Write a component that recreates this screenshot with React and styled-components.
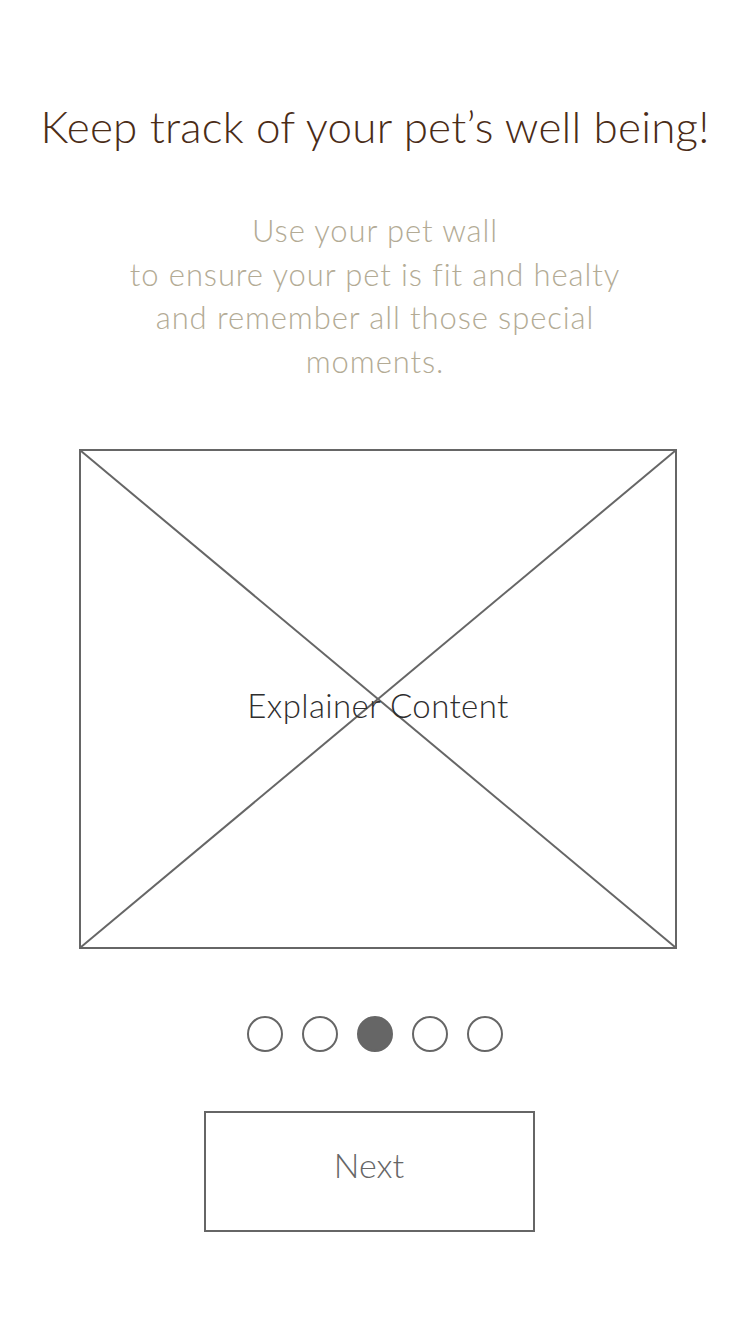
import React from "react";
import styled, { createGlobalStyle } from "styled-components";

const Global = createGlobalStyle`
  html, body { margin: 0; padding: 0; background: #fff; }
  body { font-family: Lato, "Open Sans", sans-serif; font-weight: 300; }
`;

const Page = styled.main`
  width: 750px;
  min-height: 1334px;
  display: flex;
  flex-direction: column;
  align-items: center;
  box-sizing: border-box;
  padding-top: 96px;
`;

const Title = styled.h1`
  margin: 0;
  font-size: 44px;
  font-weight: 300;
  line-height: 60px;
  color: #4a2c17;
  white-space: nowrap;
  letter-spacing: 0.2px;
`;

const Subtitle = styled.p`
  margin: 53px 0 0;
  font-size: 31px;
  line-height: 43.5px;
  font-weight: 300;
  color: #b3ab95;
  text-align: center;
  letter-spacing: 0.9px;
`;

const Explainer = styled.div`
  position: relative;
  margin: 66px 0 0 6px;
  width: 598px;
  height: 500px;
  box-sizing: border-box;
  border: 2px solid #666;
  display: flex;
  align-items: center;
  justify-content: center;
`;

const Cross = styled.svg`
  position: absolute;
  inset: 0;
  width: 100%;
  height: 100%;
`;

const ExplainerLabel = styled.span`
  position: relative;
  margin-top: 12px;
  font-size: 33px;
  font-weight: 300;
  color: #2e2e2e;
  letter-spacing: 0.4px;
`;

const Dots = styled.div`
  display: flex;
  gap: 19px;
  margin-top: 67px;
`;

const Dot = styled.span`
  width: 36px;
  height: 36px;
  box-sizing: border-box;
  border-radius: 50%;
  border: 2px solid #666;
  background: ${(p) => (p.$active ? "#666" : "#fff")};
`;

const NextButton = styled.button`
  margin: 59px 12px 0 0;
  width: 331px;
  height: 121px;
  box-sizing: border-box;
  border: 2px solid #666;
  background: #fff;
  font-family: Lato, "Open Sans", sans-serif;
  font-weight: 300;
  font-size: 34px;
  color: #666;
  padding: 0 0 14px;
`;

export default function App() {
  return (
    <>
      <Global />
      <Page>
        <Title>Keep track of your pet’s well being!</Title>
        <Subtitle>
          Use your pet wall
          <br />
          to ensure your pet is fit and healty
          <br />
          and remember all those special
          <br />
          moments.
        </Subtitle>
        <Explainer>
          <Cross viewBox="0 0 100 100" preserveAspectRatio="none">
            <line x1="0" y1="0" x2="100" y2="100" stroke="#666" strokeWidth="2" vectorEffect="non-scaling-stroke" />
            <line x1="100" y1="0" x2="0" y2="100" stroke="#666" strokeWidth="2" vectorEffect="non-scaling-stroke" />
          </Cross>
          <ExplainerLabel>Explainer Content</ExplainerLabel>
        </Explainer>
        <Dots>
          {[0, 1, 2, 3, 4].map((i) => (
            <Dot key={i} $active={i === 2} />
          ))}
        </Dots>
        <NextButton>Next</NextButton>
      </Page>
    </>
  );
}
